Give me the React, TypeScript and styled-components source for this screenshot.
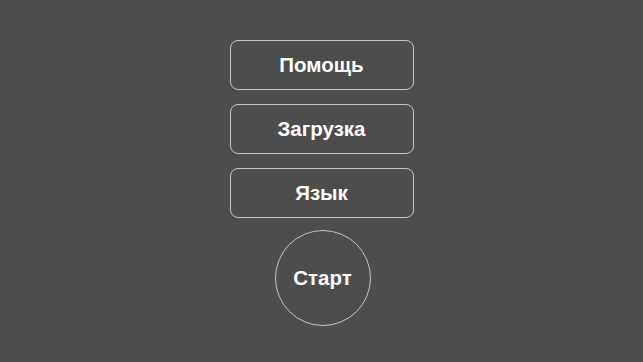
import React from "react";
import styled, { createGlobalStyle } from "styled-components";

const GlobalStyle = createGlobalStyle`
  html, body {
    margin: 0;
    padding: 0;
    background: #4e4d4d;
  }
`;

const Screen = styled.div`
  width: 643px;
  height: 362px;
  background: #4e4d4d;
  display: flex;
  flex-direction: column;
  align-items: center;
  padding-top: 40px;
  box-sizing: border-box;
  font-family: "Liberation Sans", Arial, sans-serif;
`;

const Menu = styled.div`
  display: flex;
  flex-direction: column;
  align-items: center;
  gap: 14px;
`;

const MenuButton = styled.button`
  width: 184px;
  height: 50px;
  box-sizing: border-box;
  border: 1.5px solid #c4c4c4;
  border-radius: 8px;
  background: transparent;
  color: #ffffff;
  font-family: inherit;
  font-weight: bold;
  font-size: 20.5px;
  padding: 0;
  cursor: pointer;
`;

const StartButton = styled.button`
  width: 96px;
  height: 96px;
  margin-top: 12px;
  margin-left: 2px;
  box-sizing: border-box;
  border: 1.5px solid #c4c4c4;
  border-radius: 50%;
  background: transparent;
  color: #ffffff;
  font-family: inherit;
  font-weight: bold;
  font-size: 20.5px;
  padding: 0;
  cursor: pointer;
`;

const items = ["Помощь", "Загрузка", "Язык"];

const App = () => {
  return (
    <>
      <GlobalStyle />
      <Screen>
        <Menu>
          {items.map((label) => (
            <MenuButton key={label}>{label}</MenuButton>
          ))}
        </Menu>
        <StartButton>Старт</StartButton>
      </Screen>
    </>
  );
};

export default App;
